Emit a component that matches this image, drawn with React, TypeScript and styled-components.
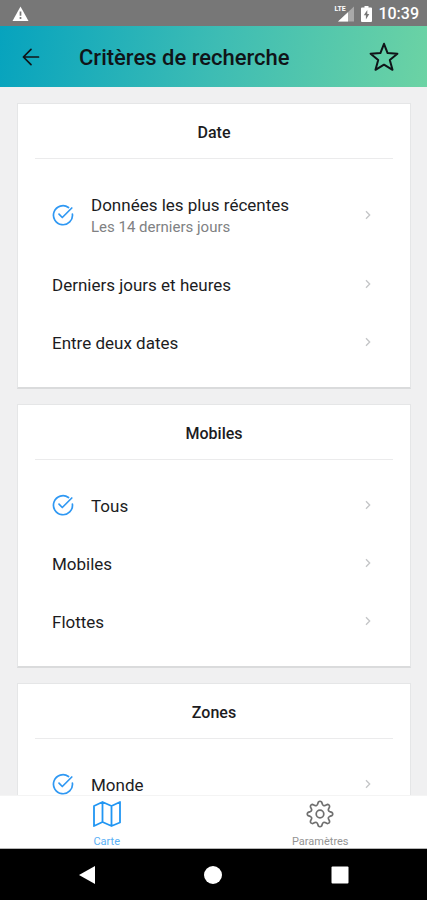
import React from "react";
import styled, { createGlobalStyle } from "styled-components";

const GlobalStyle = createGlobalStyle`
  *, *::before, *::after { box-sizing: border-box; }
  html, body, #root { height: 100%; }
  body {
    margin: 0;
    background: #f0f0f1;
    color: #1c1c1e;
    font-family: Roboto, "Noto Sans", sans-serif;
  }
  button {
    margin: 0;
    padding: 0;
    border: 0;
    background: none;
    color: inherit;
    font: inherit;
    cursor: pointer;
  }
  svg { display: block; flex: none; }
`;

const Screen = styled.div`
  display: flex;
  flex-direction: column;
  height: 100vh;
`;

const StatusBar = styled.div`
  flex: none;
  display: flex;
  align-items: center;
  justify-content: space-between;
  height: 26px;
  padding: 2px 8px 0 12px;
  background: #777777;
  color: #ffffff;
`;

const StatusIcons = styled.div`
  display: flex;
  align-items: center;
  gap: 6px;
`;

const Signal = styled.span`
  position: relative;
  display: block;
`;

const SignalLabel = styled.span`
  position: absolute;
  top: 0;
  left: 0;
  font-size: 7px;
  line-height: 7px;
  font-weight: 700;
`;

const Clock = styled.time`
  font-size: 16px;
  line-height: 24px;
  font-weight: 500;
`;

const Header = styled.header`
  flex: none;
  display: flex;
  align-items: center;
  height: 61px;
  padding: 0 28px 0 20px;
  background: linear-gradient(100deg, #06a3be 0%, #3dbcb4 50%, #6cd3a4 100%);
  color: #101418;
`;

const IconButton = styled.button`
  display: flex;
  align-items: center;
  justify-content: center;
`;

const Title = styled.h1`
  flex: 1;
  margin: 0;
  padding: 3px 0 0 37px;
  font-size: 22px;
  line-height: 28px;
  font-weight: 500;
`;

const Content = styled.main`
  flex: 1;
  min-height: 0;
  overflow-y: auto;
  display: flex;
  flex-direction: column;
  gap: 15px;
  padding: 16px 16px 16px 17px;
  scrollbar-width: none;
`;

const Card = styled.section`
  flex: none;
  padding: 0 17px 16px;
  background: #ffffff;
  border: 1px solid #e5e6e7;
  border-bottom: 2px solid #dadbdc;
`;

const CardTitle = styled.h2`
  margin: 0;
  padding: 19px 0 15px;
  border-bottom: 1px solid #ebebec;
  font-size: 16px;
  line-height: 20px;
  font-weight: 500;
  text-align: center;
`;

const OptionList = styled.ul`
  margin: 0;
  padding: 16px 0 0;
  list-style: none;
`;

const Option = styled.button<{ $tall?: boolean }>`
  display: flex;
  align-items: center;
  width: 100%;
  min-height: ${({ $tall }) => ($tall ? 80 : 58)}px;
  padding: 0 22px 0 17px;
  text-align: left;
`;

const Tick = styled.span`
  flex: none;
  width: 39px;
`;

const OptionText = styled.span`
  flex: 1;
  display: flex;
  flex-direction: column;
  padding-top: 2px;
`;

const OptionLabel = styled.span`
  font-size: 17px;
  line-height: 22px;
`;

const OptionDetail = styled.span`
  font-size: 15px;
  line-height: 22px;
  color: #808183;
`;

const TabBar = styled.nav`
  flex: none;
  display: flex;
  height: 54px;
  border-top: 1px solid #f4f4f4;
  border-bottom: 1px solid #b5b5b5;
  background: #ffffff;
`;

const Tab = styled.button<{ $active?: boolean }>`
  flex: 1;
  display: flex;
  flex-direction: column;
  align-items: center;
  padding-top: 4px;
  gap: 8px;
  color: ${({ $active }) => ($active ? "#2196f3" : "#6f6f6f")};
`;

const TabLabel = styled.span`
  font-size: 11px;
  line-height: 12px;
  opacity: 0.75;
`;

const SystemBar = styled.nav`
  flex: none;
  display: grid;
  grid-template-columns: repeat(3, 1fr);
  align-items: center;
  height: 51px;
  padding: 0 24px;
  background: #000000;
  color: #ffffff;
`;

const polar = (radius: number, degrees: number) => {
  const a = ((degrees - 90) * Math.PI) / 180;
  return `${(14 + radius * Math.cos(a)).toFixed(2)} ${(14 + radius * Math.sin(a)).toFixed(2)}`;
};

const gearPath =
  `M${polar(10, -14)}` +
  Array.from({ length: 8 }, (_, i) => {
    const a = i * 45;
    return (
      `L${polar(12, a - 8)}Q${polar(13.6, a)} ${polar(12, a + 8)}` +
      `L${polar(10, a + 14)}Q${polar(8.4, a + 22.5)} ${polar(10, a + 31)}`
    );
  }).join("") +
  "Z";

const WarningIcon = () => (
  <svg width="17" height="16" viewBox="0 0 17 16" aria-hidden="true">
    <path d="M8.5 0.5 16.5 15H0.5Z" fill="#fff" />
    <path d="M8.5 5.5v4.2M8.5 11v2" stroke="#777" strokeWidth="1.7" />
  </svg>
);

const SignalIcon = () => (
  <svg width="21" height="16" viewBox="0 0 21 16" aria-hidden="true">
    <path d="M20 0.5V15.5H4Z" fill="#a9a9a9" />
    <path d="M14 6.2V15.5H4Z" fill="#fff" />
  </svg>
);

const BatteryIcon = () => (
  <svg width="11" height="16" viewBox="0 0 11 16" aria-hidden="true">
    <path d="M3.5 0h4v1.5H10a1 1 0 0 1 1 1V15a1 1 0 0 1-1 1H1a1 1 0 0 1-1-1V2.500a1 1 0 0 1 1-1h2.500Z" fill="#fff" />
    <path d="M6.300 4 2.800 9.300h2.100V13.500L8.300 8H6.300Z" fill="#777" />
  </svg>
);

const BackIcon = () => (
  <svg width="22" height="22" viewBox="0 0 22 22" fill="none" stroke="currentColor" strokeWidth="1.7" strokeLinecap="round" strokeLinejoin="round" aria-hidden="true">
    <path d="M18.500 11H3.500M11 3.300 3.400 11 11 18.700" />
  </svg>
);

const StarIcon = () => (
  <svg width="30" height="30" viewBox="0 0 30 30" fill="none" stroke="currentColor" strokeWidth="2" strokeLinejoin="round" aria-hidden="true">
    <path d="M15 1.800 18.600 11.100 28.400 11.700 20.800 17.900 23.500 27.800 15 22.700 6.500 27.800 9.200 17.900 1.600 11.700 11.400 11.100Z" />
  </svg>
);

const TickIcon = () => (
  <svg width="22" height="22" viewBox="0 0 22 22" fill="none" stroke="#2f98f3" strokeWidth="1.7" strokeLinecap="round" strokeLinejoin="round" aria-label="Sélectionné" role="img">
    <path d="M16.500 3.500A9.500 9.500 0 1 0 20.400 10" />
    <path d="M7 10.200 10.300 13.500 19.800 4" />
  </svg>
);

const ChevronIcon = () => (
  <svg width="6" height="10" viewBox="0 0 6 10" fill="none" stroke="#c4c5c7" strokeWidth="1.3" aria-hidden="true">
    <path d="M1 1.200 4.700 5 1 8.800" />
  </svg>
);

const MapIcon = () => (
  <svg width="28" height="28" viewBox="0 0 28 28" fill="none" stroke="currentColor" strokeWidth="1.8" strokeLinejoin="round" aria-hidden="true">
    <path d="M1 6 9.500 2 18.500 6 27 2V22.500L18.500 26 9.500 22 1 26ZM9.500 2V22M18.500 6V26" />
  </svg>
);

const GearIcon = () => (
  <svg width="28" height="28" viewBox="0 0 28 28" fill="none" stroke="currentColor" strokeWidth="1.700" strokeLinejoin="round" aria-hidden="true">
    <path d={gearPath} />
    <circle cx="14" cy="14" r="3.800" />
  </svg>
);

interface OptionItem {
  label: string;
  detail?: string;
  selected?: boolean;
}

const sections: { title: string; options: OptionItem[] }[] = [
  {
    title: "Date",
    options: [
      { label: "Données les plus récentes", detail: "Les 14 derniers jours", selected: true },
      { label: "Derniers jours et heures" },
      { label: "Entre deux dates" },
    ],
  },
  {
    title: "Mobiles",
    options: [{ label: "Tous", selected: true }, { label: "Mobiles" }, { label: "Flottes" }],
  },
  {
    title: "Zones",
    options: [{ label: "Monde", selected: true }],
  },
];

export default function App() {
  return (
    <>
      <GlobalStyle />
      <Screen>
        <StatusBar>
          <WarningIcon />
          <StatusIcons>
            <Signal>
              <SignalIcon />
              <SignalLabel>LTE</SignalLabel>
            </Signal>
            <BatteryIcon />
            <Clock>10:39</Clock>
          </StatusIcons>
        </StatusBar>
        <Header>
          <IconButton type="button" aria-label="Retour">
            <BackIcon />
          </IconButton>
          <Title>Critères de recherche</Title>
          <IconButton type="button" aria-label="Favori">
            <StarIcon />
          </IconButton>
        </Header>
        <Content>
          {sections.map((section) => (
            <Card key={section.title}>
              <CardTitle>{section.title}</CardTitle>
              <OptionList>
                {section.options.map((option) => (
                  <li key={option.label}>
                    <Option type="button" $tall={Boolean(option.detail)}>
                      {option.selected && (
                        <Tick>
                          <TickIcon />
                        </Tick>
                      )}
                      <OptionText>
                        <OptionLabel>{option.label}</OptionLabel>
                        {option.detail && <OptionDetail>{option.detail}</OptionDetail>}
                      </OptionText>
                      <ChevronIcon />
                    </Option>
                  </li>
                ))}
              </OptionList>
            </Card>
          ))}
        </Content>
        <TabBar>
          <Tab type="button" $active aria-current="page">
            <MapIcon />
            <TabLabel>Carte</TabLabel>
          </Tab>
          <Tab type="button">
            <GearIcon />
            <TabLabel>Paramètres</TabLabel>
          </Tab>
        </TabBar>
        <SystemBar>
          <IconButton type="button" aria-label="Précédent">
            <svg width="18" height="20" viewBox="0 0 18 20" aria-hidden="true">
              <path d="M1 10 17 1V19Z" fill="currentColor" />
            </svg>
          </IconButton>
          <IconButton type="button" aria-label="Accueil">
            <svg width="20" height="20" viewBox="0 0 20 20" aria-hidden="true">
              <circle cx="10" cy="10" r="9" fill="currentColor" />
            </svg>
          </IconButton>
          <IconButton type="button" aria-label="Applications récentes">
            <svg width="18" height="18" viewBox="0 0 18 18" aria-hidden="true">
              <rect width="17" height="17" x="0.5" y="0.5" rx="1" fill="currentColor" />
            </svg>
          </IconButton>
        </SystemBar>
      </Screen>
    </>
  );
}
